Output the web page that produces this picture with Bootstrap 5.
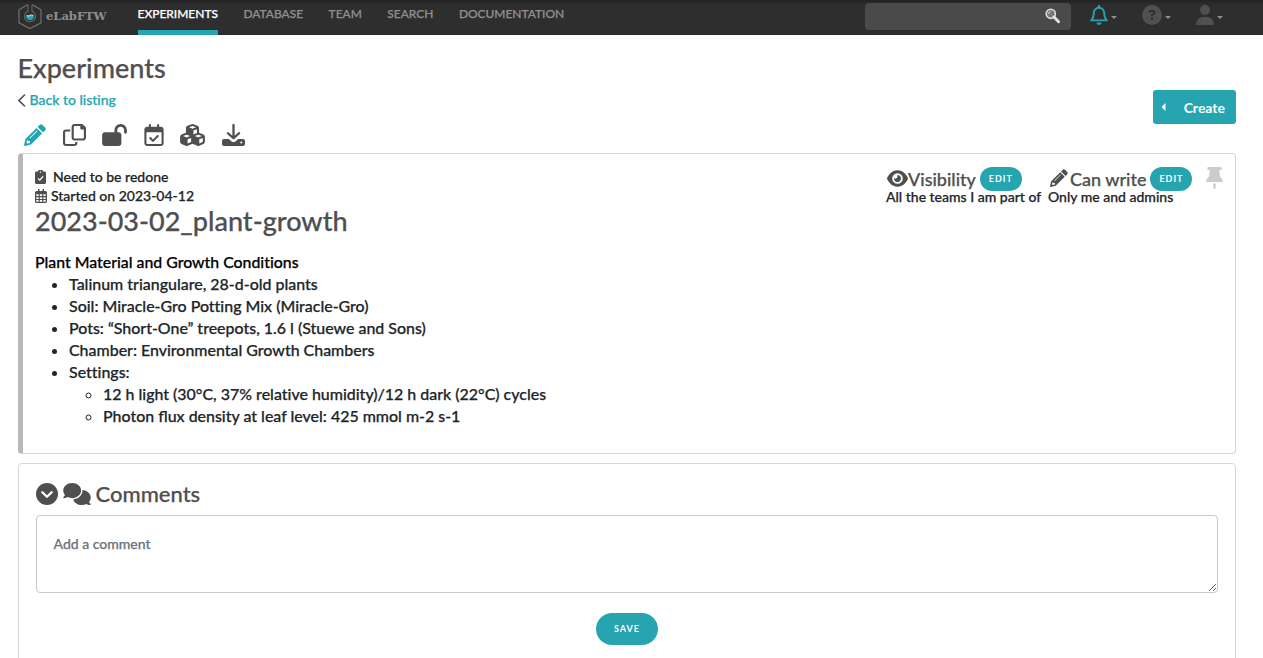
<!DOCTYPE html>
<html lang="en">
<head>
<meta charset="utf-8">
<meta name="viewport" content="width=device-width, initial-scale=1">
<title>Experiments - eLabFTW</title>
<link href="https://cdn.jsdelivr.net/npm/bootstrap@5.3.0/dist/css/bootstrap.min.css" rel="stylesheet">
<style>
:root { --teal: #26a4b0; --ink: #4f4f4f; }
body { font: 500 14px/19px Lato, "Open Sans", sans-serif; color: #212529; overflow: hidden; height: 658px; font-variant-ligatures: none; -webkit-text-stroke: .25px; }
svg { display: block; flex: none; }
a { color: var(--teal); text-decoration: none; }
h1, h2, h3 { font-weight: 500; color: var(--ink); margin: 0; }
.topbar { height: 35px; background: linear-gradient(#222 0, #2e2e2e 5px, #2e2e2e 34px, #222 35px); padding: 0 40px 0 18px; }
.logo-text { font: bold 11.5px/33px "DejaVu Serif", serif; color: #8f8f8f; width: 92px; padding-left: 4px; -webkit-text-stroke: 0; }
.topbar .nav-link { padding: 0; margin-right: 25.5px; height: 35px; line-height: 28px; font-size: 11.95px; color: #8f8f8f; text-transform: uppercase; }
.topbar .nav-link.active { color: #fff; border-bottom: 5px solid var(--teal); }
.finder { width: 206px; height: 27px; margin-top: 3px; background: #4a4a4a; border-radius: 4px; padding: 5px 10px; }
.tick { border: 3px solid transparent; border-top-color: #8f8f8f; border-bottom: 0; margin-left: 3px; margin-top: 4px; }
.page { height: 623px; overflow: hidden; padding: 18px 27px 0 18px; }
.page h1 { font-size: 27px; line-height: 30px; margin-left: -.5px; }
.back { line-height: 20px; margin-top: 7px; margin-left: -.5px; }
.create { background: var(--teal); color: #fff; width: 83px; height: 34px; border-radius: 3px; font-size: 14px; font-weight: 700; padding: 0 11px 0 8px; margin-top: 37px; -webkit-text-stroke: 0; }
.tools { height: 22px; color: var(--ink); margin: 14px 0 0 6px; }
.box { border: 1px solid #d6d6d6; border-radius: 4px; background: #fff; }
.entry { border-left: 5px solid #b8b8b8; height: 301px; margin-top: 7px; padding: 13px 12px 0 12px; }
.entry h2 { font-size: 27px; line-height: 31px; }
.perm { color: var(--ink); font-size: 18px; line-height: 24px; height: 20px; }
.pill { background: var(--teal); color: #fff; border-radius: 16px; font-size: 9px; letter-spacing: 1px; font-weight: 700; height: 24px; line-height: 24px; width: 42px; text-align: center; margin-left: 4px; -webkit-text-stroke: 0; }
.prose { font-size: 15.95px; line-height: 22px; margin-top: 15px; }
.prose p { color: #000; font-size: 15.85px; margin: 0; }
.prose ul { margin: 0; padding-left: 34px; }
.lig { font-variant-ligatures: normal; }
.talk { height: 240px; margin-top: 9px; padding: 16px 17px 0; }
.talk h3 { font-size: 22px; line-height: 27px; }
.talk textarea { height: 78px; margin-top: 8px; border-color: #c5cbd3; border-radius: 4px; padding: 17px 16.5px; font-size: 14px; font-weight: 500; line-height: 21px; }
.talk textarea::placeholder { color: #6c757d; }
.save { width: 62px; height: 32px; line-height: 32px; margin: 20px auto 0; }
</style>
</head>
<body>
<header class="topbar d-flex align-items-start">
  <svg width="24" height="27" viewBox="0 0 24 27" style="margin-top:3px" fill="none">
    <path d="M10 1.500 1 6.800v13L12 25.500l11-5.700v-13L14 1.500" stroke="#707070" stroke-width="1.200"/>
    <path d="M10 2v6.200a5.500 5.500 0 1 0 4 0V2" stroke="#686868" stroke-width="1.100"/>
    <path d="M8.200 12h7.600a4 4 0 1 1-7.600 0z" fill="#26a4b0"/><path d="M9 12.500q1.500 1.500 3 0t3 0" stroke="#c9f3f6"/>
  </svg>
  <span class="logo-text">eLabFTW</span>
  <nav class="nav" style="margin-left:3.5px">
    <a class="nav-link active" href="#">Experiments</a>
    <a class="nav-link" href="#">Database</a>
    <a class="nav-link" href="#">Team</a>
    <a class="nav-link" href="#">Search</a>
    <a class="nav-link" href="#">Documentation</a>
  </nav>
  <div class="finder ms-auto d-flex justify-content-end">
    <svg width="15" height="16" viewBox="0 0 15 16" fill="none" style="margin-right:1px"><circle cx="5.800" cy="5.800" r="4.600" fill="#777" stroke="#ddd" stroke-width="1.600"/><path d="M3.600 6a2.400 2.400 0 0 1 2-2.500" stroke="#ddd"/><path d="m9 9 4.600 4.800" stroke="#e6e6e6" stroke-width="2.800" stroke-linecap="round"/></svg>
  </div>
  <div class="d-flex align-items-center" style="margin:5px 0 0 19px">
    <svg width="18" height="20" viewBox="0 0 448 512" fill="#26a4b0"><path d="M224 0c-17.700 0-32 14.300-32 32V51.200C119 66 64 130.600 64 208v25.400c0 45.400-15.500 89.500-43.800 124.900L5.300 377c-5.800 7.200-6.900 17.100-2.900 25.400S14.800 416 24 416H424c9.200 0 17.600-5.300 21.600-13.600s2.900-18.200-2.900-25.400l-14.900-18.600C399.500 322.900 384 278.800 384 233.400V208c0-77.400-55-142-128-156.800V32c0-17.700-14.300-32-32-32zm0 96c61.900 0 112 50.100 112 112v25.400c0 47.900 13.900 94.600 39.700 134.600H72.300C98.100 328 112 281.300 112 233.400V208c0-61.900 50.100-112 112-112zm64 352H160c0 17 6.700 33.300 18.700 45.300s28.300 18.700 45.300 18.700s33.300-6.700 45.300-18.700s18.700-28.300 18.700-45.300z"/></svg>
    <span class="tick"></span>
    <svg width="20" height="20" viewBox="0 0 512 512" fill="#505050" style="margin-left:25px"><path d="M256 512A256 256 0 1 0 256 0a256 256 0 1 0 0 512zM169.800 165.300c7.900-22.300 29.100-37.300 52.800-37.300h58.300c34.900 0 63.100 28.300 63.100 63.100c0 22.600-12.100 43.500-31.700 54.800L280 264.400c-.2 13-10.900 23.600-24 23.600c-13.300 0-24-10.700-24-24V250.500c0-8.600 4.600-16.500 12.100-20.800l44.300-25.400c4.700-2.700 7.600-7.700 7.600-13.100c0-8.400-6.800-15.100-15.100-15.100H222.600c-3.400 0-6.400 2.100-7.500 5.300l-.4 1.200c-4.400 12.500-18.200 19-30.600 14.600s-19-18.200-14.600-30.600zM224 352a32 32 0 1 1 64 0 32 32 0 1 1 -64 0z"/></svg>
    <span class="tick"></span>
    <svg width="18" height="20" viewBox="0 0 448 512" fill="#505050" style="margin-left:25px"><path d="M224 256A128 128 0 1 0 224 0a128 128 0 1 0 0 256zm-45.700 48C79.800 304 0 383.800 0 482.300C0 498.700 13.300 512 29.700 512H418.300c16.400 0 29.700-13.300 29.700-29.700C448 383.800 368.200 304 269.700 304H178.300z"/></svg>
    <span class="tick"></span>
  </div>
</header>

<main class="page">
  <div class="d-flex justify-content-between align-items-start">
    <div>
      <h1>Experiments</h1>
      <div class="back d-flex align-items-center"><svg width="8" height="13" viewBox="0 0 8 13" fill="none" stroke="#4f4f4f" stroke-width="1.600" stroke-linecap="round"><path d="M6.500 1 1 6.500 6.500 12"/></svg><a href="#" style="margin-left:4px">Back to listing</a></div>
      <div class="tools d-flex">
        <svg width="22" height="22" viewBox="0 0 512 512" fill="#26a4b0"><g id="pencil"><path fill-rule="evenodd" d="M292 92 420 220 162 478 28 510Q-2 514 3 484L34 350zM74 376 58 440l16 16 64-16v-44h-44v-20zM126 326l12 12L310 166l-12-12z"/><path d="M315 69l46-46q34-34 68 0l60 60q34 34 0 68l-46 46z"/></g></svg>
        <svg width="23" height="22" viewBox="0 0 512 512" fill="currentColor" preserveAspectRatio="none" style="margin-left:17px"><path d="M502.600 70.630l-61.250-61.250C435.400 3.371 427.200 0 418.700 0H256c-35.350 0-64 28.660-64 64v256C192 355.400 220.700 384 256 384h192c35.200 0 64-28.800 64-64V93.250C512 84.770 508.600 76.630 502.600 70.630zM464 320c0 8.836-7.164 16-16 16H256c-8.838 0-16-7.164-16-16V64.130c0-8.836 7.164-16 16-16h128V96c0 17.670 14.330 32 32 32h48V320zM272 448c0 8.836-7.164 16-16 16H64c-8.838 0-16-7.164-16-16V192.100c0-8.836 7.164-16 16-16h96V128H64c-35.350 0-64 28.650-64 64v256C0 483.300 28.660 512 64 512h192c35.200 0 64-28.800 64-64v-32h-48z"/></svg>
        <svg width="25" height="22" viewBox="0 0 576 512" fill="currentColor" style="margin-left:16px"><path d="M352 192H384C419.300 192 448 220.700 448 256V448C448 483.300 419.300 512 384 512H64C28.650 512 0 483.300 0 448V256C0 220.700 28.650 192 64 192H288V144C288 64.470 352.500 0 432 0C511.500 0 576 64.470 576 144V192C576 209.700 561.700 224 544 224C526.300 224 512 209.700 512 192V144C512 99.820 476.200 64 432 64C387.800 64 352 99.820 352 144V192z"/></svg>
        <svg width="20" height="22" viewBox="0 0 448 512" fill="currentColor" style="margin-left:17px"><path d="M128 0c13.300 0 24 10.700 24 24V64H296V24c0-13.300 10.700-24 24-24s24 10.700 24 24V64h40c35.300 0 64 28.700 64 64V448c0 35.300-28.700 64-64 64H64c-35.300 0-64-28.700-64-64V128C0 92.700 28.700 64 64 64h40V24c0-13.300 10.700-24 24-24zM400 192H48V448c0 8.800 7.200 16 16 16H384c8.800 0 16-7.200 16-16V192zM329 297L217 409c-9.400 9.400-24.600 9.400-33.900 0l-64-64c-9.400-9.400-9.400-24.600 0-33.900s24.600-9.400 33.900 0l47 47 95-95c9.400-9.400 24.600-9.400 33.900 0s9.400 24.600 0 33.900z"/></svg>
        <svg width="25" height="22" viewBox="0 0 576 512" fill="currentColor" style="margin-left:16px"><path d="M290.800 48.600l78.400 29.700L288 109.500 206.800 78.300l78.400-29.700c1.800-.7 3.800-.7 5.700 0zM136 92.500V204.700c-1.300 .4-2.600 .8-3.900 1.300l-96 36.400C14.400 250.600 0 271.500 0 294.700V413.900c0 22.200 13.100 42.300 33.500 51.300l96 42.200c14.400 6.300 30.700 6.300 45.100 0L288 457.500l113.500 49.900c14.400 6.300 30.700 6.300 45.100 0l96-42.200c20.300-8.900 33.500-29.100 33.500-51.300V294.700c0-23.300-14.400-44.100-36.100-52.400l-96-36.400c-1.300-.5-2.600-.9-3.900-1.300V92.500c0-23.300-14.400-44.100-36.100-52.400l-96-36.400c-12.800-4.800-26.900-4.800-39.700 0l-96 36.400C150.400 48.400 136 69.300 136 92.500zM392 210.600l-82.400 31.200V152.600L392 121v89.600zM154.800 250.900l78.400 29.700L152 311.700 70.800 280.600l78.400-29.700c1.800-.7 3.800-.7 5.700 0zm18.800 204.400V354.800L256 323.200v95.900l-82.400 36.200zM421.200 250.900c1.800-.7 3.800-.7 5.700 0l78.400 29.700L424 311.700l-81.200-31.100 78.400-29.700zM523.200 421.200l-77.600 34.100V354.800L528 323.200v90.700c0 3.200-1.900 6-4.800 7.300z"/></svg>
        <svg width="23" height="22" viewBox="0 0 22 22" preserveAspectRatio="none" style="margin-left:17px"><path d="M2 15h4.500l2.700 2.500q1.800 1.200 3.600 0L15.500 15H20q2 0 2 2v3q0 2-2 2H2q-2 0-2-2v-3q0-2 2-2z" fill="currentColor"/><path d="M11 1v13M5.700 9.200 11 14.300l5.300-5.100" fill="none" stroke="currentColor" stroke-width="2.200" stroke-linecap="round" stroke-linejoin="round"/><circle cx="18.500" cy="18.500" r="1" fill="#fff"/></svg>
      </div>
    </div>
    <button class="create btn border-0 d-flex align-items-center justify-content-between"><svg width="5" height="8" viewBox="0 0 5 8"><path d="M4.500 0v8L.5 4z" fill="#fff"/></svg>Create</button>
  </div>

  <section class="box entry">
    <div class="d-flex justify-content-between align-items-start">
      <div>
        <div class="d-flex align-items-center"><svg width="11" height="14" viewBox="0 0 11 14"><path d="M1.500 1.600H3a2.500 2 0 0 1 5 0h1.500Q11 1.600 11 3v9.500q0 1.500-1.500 1.500h-8Q0 14 0 12.500V3q0-1.400 1.500-1.400z" fill="#4f4f4f"/><circle cx="5.500" cy="2" r=".7" fill="#fff"/><path d="m3 8.400 1.800 1.700 3.300-3.700" fill="none" stroke="#fff" stroke-width="1.300"/></svg><span style="margin-left:7px">Need to be redone</span></div>
        <div class="d-flex align-items-center"><svg width="12" height="14" viewBox="0 0 12 14"><path d="M1.500 2h9q1.500 0 1.500 1.500v9q0 1.500-1.500 1.500h-9Q0 14 0 12.500v-9Q0 2 1.500 2zM3 0h1.500v3H3zM7.500 0H9v3H7.500z" fill="#4f4f4f"/><path d="M1.300 5.300h2.300v1.800H1.300zm3.500 0h2.400v1.800H4.800zm3.600 0h2.300v1.800H8.400zM1.300 8.200h2.300V10H1.300zm3.500 0h2.400V10H4.800zm3.600 0h2.300V10H8.400zm-7.100 2.900h2.300v1.600H1.300zm3.500 0h2.400v1.600H4.800zm3.600 0h2.300v1.600H8.400z" fill="#fff"/></svg><span style="margin-left:4px">Started on 2023-04-12</span></div>
        <h2>2023-03-02_plant-growth</h2>
      </div>
      <div class="d-flex">
        <div style="width:162px">
          <div class="perm d-flex"><svg width="21" height="19" viewBox="0 0 576 512" fill="currentColor" style="margin:2px 0 0 1px"><path d="M288 32c-80.800 0-145.500 36.800-192.600 80.600C48.600 156 17.300 208 2.500 243.700c-3.300 7.900-3.300 16.700 0 24.600C17.300 304 48.600 356 95.400 399.400C142.500 443.200 207.200 480 288 480s145.500-36.800 192.600-80.600c46.800-43.500 78.100-95.400 93-131.100c3.300-7.900 3.300-16.700 0-24.600c-14.900-35.700-46.200-87.700-93-131.100C433.500 68.800 368.800 32 288 32zM144 256a144 144 0 1 1 288 0 144 144 0 1 1 -288 0zm144-64c0 35.300-28.700 64-64 64c-7.100 0-13.900-1.200-20.300-3.300c-5.500-1.800-11.900 1.600-11.700 7.400c.3 6.900 1.300 13.800 3.200 20.700c13.700 51.200 66.400 81.600 117.600 67.900s81.600-66.400 67.900-117.600c-11.100-41.500-47.800-69.400-88.600-71.100c-5.800-.2-9.200 6.100-7.400 11.700c2.100 6.400 3.300 13.200 3.300 20.300z"/></svg>Visibility<span class="pill">EDIT</span></div>
          <div class="text-nowrap">All the teams I am part of</div>
        </div>
        <div style="width:158px">
          <div class="perm d-flex"><svg width="18" height="18" viewBox="0 0 512 512" fill="currentColor" style="margin:2px 2px 0 2px"><use href="#pencil"/></svg>Can write<span class="pill">EDIT</span></div>
          <div class="text-nowrap">Only me and admins</div>
        </div>
        <svg width="17" height="22" viewBox="0 0 17 22" fill="#ccc"><path d="M2.300 0h12.400q1 0 1 1v1q0 1-1 1h-1.500l.7 6.500q3 2 3.100 5.500H0q.1-3.500 3.100-5.500L3.800 3H2.300q-1 0-1-1V1q0-1 1-1zM7.300 16.500h2.400V21L8.500 22 7.300 21z"/></svg>
      </div>
    </div>
    <div class="prose">
      <p>Plant Material and Growth Conditions</p>
      <ul>
        <li>Talinum triangulare, 28-d-old plants</li>
        <li>Soil: Miracle-Gro Potting Mix (Miracle-Gro)</li>
        <li>Pots: “Short-One” treepots, 1.6 l (Stuewe and Sons)</li>
        <li>Chamber: Environmental Growth Chambers</li>
        <li>Settings:
          <ul>
            <li>12 h light (30°C, 37% relative humidity)/12 h dark (22°C) cycles</li>
            <li>Photon <span class="lig">flux</span> density at leaf level: 425 mmol m-2 s-1</li>
          </ul>
        </li>
      </ul>
    </div>
  </section>

  <section class="box talk">
    <div class="d-flex align-items-center">
      <svg width="22" height="22" viewBox="0 0 22 22"><circle cx="11" cy="11" r="11" fill="#4f4f4f"/><path d="m6.300 9.200 4.700 4.600 4.700-4.600" fill="none" stroke="#fff" stroke-width="2.300" stroke-linecap="round" stroke-linejoin="round"/></svg>
      <svg width="28" height="22" viewBox="0 0 640 512" fill="#4f4f4f" style="margin-left:5px"><path d="M208 352c114.900 0 208-78.800 208-176S322.900 0 208 0S0 78.800 0 176c0 38.600 14.700 74.300 39.600 103.400c-3.500 9.400-8.700 17.700-14.200 24.700c-4.800 6.200-9.700 11-13.300 14.300c-1.800 1.600-3.300 2.900-4.300 3.700c-.5 .4-.9 .7-1.100 .8l-.2 .2C1 327.200-1.400 334.400 .8 340.900S9.100 352 16 352c21.800 0 43.800-5.600 62.100-12.500c9.200-3.500 17.800-7.400 25.200-11.400C134.100 343.300 169.800 352 208 352zM448 176c0 112.300-99.100 196.900-216.500 207C255.800 457.400 336.400 512 432 512c38.200 0 73.900-8.700 104.700-23.900c7.500 4 16 7.900 25.200 11.400c18.300 6.900 40.300 12.500 62.100 12.500c6.900 0 13.100-4.500 15.200-11.100c2.100-6.600-.2-13.800-5.800-17.900l-.2-.2c-.2-.2-.6-.4-1.100-.8c-1-.8-2.500-2-4.300-3.700c-3.600-3.300-8.500-8.100-13.300-14.300c-5.500-7-10.700-15.400-14.200-24.700c24.900-29 39.600-64.700 39.600-103.400c0-92.800-84.900-168.900-192.600-175.500c.4 5.100 .6 10.300 .6 15.500z"/></svg>
      <h3 style="margin-left:4.5px">Comments</h3>
    </div>
    <textarea class="form-control" placeholder="Add a comment"></textarea>
    <div class="pill save">SAVE</div>
  </section>
</main>
<script src="https://cdn.jsdelivr.net/npm/bootstrap@5.3.0/dist/js/bootstrap.bundle.min.js"></script>
</body>
</html>
